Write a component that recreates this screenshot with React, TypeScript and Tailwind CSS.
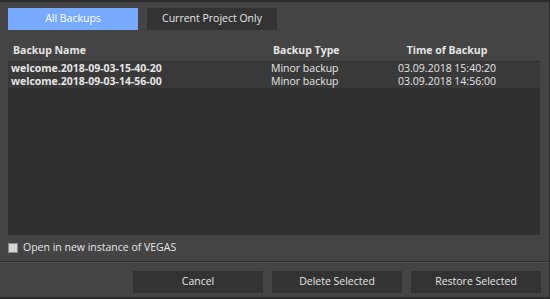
import React from 'react';

const rows = [
  { name: 'welcome.2018-09-03-15-40-20', type: 'Minor backup', time: '03.09.2018 15:40:20' },
  { name: 'welcome.2018-09-03-14-56-00', type: 'Minor backup', time: '03.09.2018 14:56:00' },
];

const App: React.FC = () => {
  return (
    <div
      className="w-[550px] h-[299px] bg-[#444444] border-t-2 border-t-[#2c2c2c] border-r border-r-[#2c2c2c] border-b-2 border-b-[#2c2c2c] flex flex-col text-[10.5px] text-[#e6e6e6] overflow-hidden whitespace-nowrap"
      style={{ fontFamily: '"Open Sans", "Noto Sans", sans-serif' }}
    >
      <div className="flex flex-col px-2 pt-[6px] flex-1">
        {/* Tabs */}
        <div className="flex gap-[9px]">
          <button className="w-[130px] h-[22px] bg-[#78aaff] text-white">All Backups</button>
          <button className="w-[130px] h-[22px] bg-[#333333] text-[#e6e6e6]">Current Project Only</button>
        </div>

        {/* Header */}
        <div className="flex h-[16px] mt-[13px] items-center font-bold text-[#e6e6e6]">
          <div className="w-[263px] pl-[5px]">Backup Name</div>
          <div className="w-[116px] pl-[2px]">Backup Type</div>
          <div className="w-[120px] text-center">Time of Backup</div>
        </div>

        {/* List */}
        <div className="mt-[2px] w-[532px] h-[174px] bg-[#303030] pt-[1px]">
          {rows.map((r) => (
            <div key={r.name} className="flex h-[13px] items-center bg-[#393939] leading-none">
              <div className="w-[263px] pl-[3px] font-bold">{r.name}</div>
              <div className="w-[116px]">{r.type}</div>
              <div className="w-[120px] text-center">{r.time}</div>
            </div>
          ))}
        </div>

        {/* Checkbox */}
        <label className="flex items-center gap-[5px] mt-[7px] h-[12px]">
          <span className="w-[10px] h-[10px] bg-[#d4d4d4] border border-[#8a8a8a]" />
          <span>Open in new instance of VEGAS</span>
        </label>
      </div>

      {/* Footer */}
      <div className="border-t border-t-[#2e2e2e] shadow-[inset_0_1px_0_#555555] h-[36px] flex justify-end items-start gap-[9px] pr-2 pt-[9px]">
        <button className="w-[130px] h-[22px] bg-[#333333]">Cancel</button>
        <button className="w-[130px] h-[22px] bg-[#333333]">Delete Selected</button>
        <button className="w-[130px] h-[22px] bg-[#333333]">Restore Selected</button>
      </div>
    </div>
  );
};

export default App;
